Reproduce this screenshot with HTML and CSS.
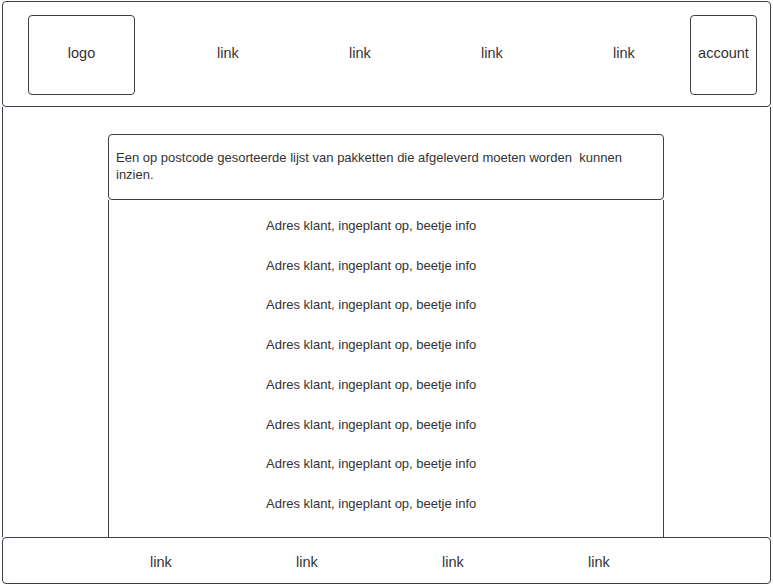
FILE: index.html
```html
<!DOCTYPE html>
<html lang="nl">
<head>
  <meta charset="UTF-8" />
  <meta name="viewport" content="width=device-width, initial-scale=1.0" />
  <title>Pakketten</title>
  <link rel="stylesheet" href="styles.css">
</head>
<body>
  <div class="page">
    <header class="topbar">
      <div class="box logo">logo</div>
      <nav class="nav">
        <a href="#">link</a>
        <a href="#">link</a>
        <a href="#">link</a>
        <a href="#">link</a>
      </nav>
      <div class="box account">account</div>
    </header>

    <main class="main">
      <section class="panel">
        <div class="panel-head">
          Een op postcode gesorteerde lijst van pakketten die afgeleverd moeten worden&nbsp; kunnen inzien.
        </div>
        <ul class="list">
          <li>Adres klant, ingeplant op, beetje info</li>
          <li>Adres klant, ingeplant op, beetje info</li>
          <li>Adres klant, ingeplant op, beetje info</li>
          <li>Adres klant, ingeplant op, beetje info</li>
          <li>Adres klant, ingeplant op, beetje info</li>
          <li>Adres klant, ingeplant op, beetje info</li>
          <li>Adres klant, ingeplant op, beetje info</li>
          <li>Adres klant, ingeplant op, beetje info</li>
        </ul>
      </section>
    </main>

    <footer class="footer">
      <a href="#">link</a>
      <a href="#">link</a>
      <a href="#">link</a>
      <a href="#">link</a>
    </footer>
  </div>
</body>
</html>
```

FILE: styles.css
```css
body {
  margin: 0;
  font-family: "Liberation Sans", Arial, sans-serif;
  color: #333;
  background: #fff;
}
a {
  color: #333;
  text-decoration: none;
}
.page {
  width: 769px;
  height: 583px;
  margin: 1px 0 0 2px;
  display: flex;
  flex-direction: column;
}
.topbar {
  height: 106px;
  box-sizing: border-box;
  border: 1px solid #3b4049;
  border-radius: 4px;
  display: flex;
  align-items: center;
  padding: 1px 13px 0 25px;
}
.box {
  height: 80px;
  box-sizing: border-box;
  border: 1px solid #3b4049;
  border-radius: 4px;
  display: flex;
  align-items: center;
  justify-content: center;
  padding-bottom: 3px;
  font-size: 14.5px;
}
.logo {
  width: 107px;
}
.account {
  width: 67px;
}
.nav {
  flex: 1;
  display: flex;
  margin-left: 27px;
  padding-bottom: 4px;
}
.nav a {
  flex: 1;
  text-align: center;
  font-size: 14.5px;
}
.main {
  flex: 1;
  border-left: 1px solid #3b4049;
  border-right: 1px solid #3b4049;
  padding: 27px 0 0 105px;
  display: flex;
}
.panel {
  width: 556px;
  display: flex;
  flex-direction: column;
}
.panel-head {
  height: 66px;
  box-sizing: border-box;
  border: 1px solid #3b4049;
  border-radius: 4px;
  padding: 14px 20px 0 7px;
  font-size: 13px;
  line-height: 17px;
}
.list {
  flex: 1;
  margin: 0;
  list-style: none;
  border-left: 1px solid #3b4049;
  border-right: 1px solid #3b4049;
  padding: 6px 0 0 157px;
}
.list li {
  font-size: 13px;
  line-height: 39.7px;
}
.footer {
  height: 47px;
  box-sizing: border-box;
  border: 1px solid #3b4049;
  border-radius: 4px;
  display: grid;
  grid-template-columns: repeat(4, 146px);
  align-items: center;
  padding: 3px 0 0 85px;
}
.footer a {
  text-align: center;
  font-size: 14.5px;
}
```
